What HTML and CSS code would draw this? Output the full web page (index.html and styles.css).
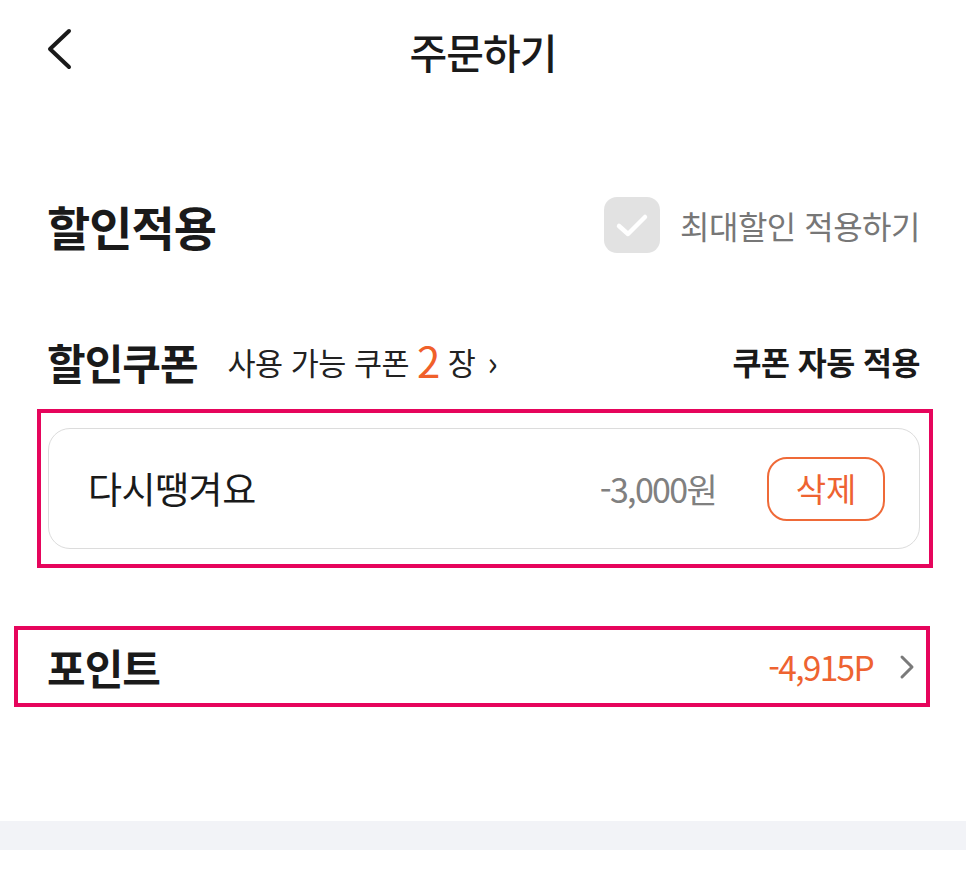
FILE: index.html
```html
<!DOCTYPE html>
<html lang="ko">
<head>
<meta charset="utf-8">
<title>주문하기</title>
<link rel="stylesheet" href="styles.css">
</head>
<body>
<div class="page">
  <header class="topbar">
    <svg class="back" width="28" height="42" viewBox="0 0 28 42"><path d="M24 3 L5 21 L24 39" fill="none" stroke="#1a1a1a" stroke-width="4" stroke-linecap="round" stroke-linejoin="round"/></svg>
    <h1 class="title">주문하기</h1>
  </header>

  <section class="discount-head">
    <h2 class="h-big">할인적용</h2>
    <label class="maxdc">
      <span class="chk"><svg width="56" height="56" viewBox="0 0 56 56"><path d="M15 29 L24 37 L41 20" fill="none" stroke="#fff" stroke-width="4.5" stroke-linecap="round" stroke-linejoin="round"/></svg></span>
      <span class="maxdc-text">최대할인 적용하기</span>
    </label>
  </section>

  <section class="coupon-head">
    <div class="coupon-left">
      <h3 class="h-mid">할인쿠폰</h3>
      <span class="avail">사용 가능 쿠폰 <b class="cnt">2</b> 장 <span class="gt">›</span></span>
    </div>
    <span class="auto">쿠폰 자동 적용</span>
  </section>

  <div class="mark mark-coupon">
    <div class="card">
      <span class="cname">다시땡겨요</span>
      <span class="camt">-3,000원</span>
      <button class="del">삭제</button>
    </div>
  </div>

  <div class="mark mark-point">
    <span class="h-mid">포인트</span>
    <span class="pright">
      <span class="pval">-4,915P</span>
      <svg width="16" height="26" viewBox="0 0 16 26"><path d="M3 3 L13 13 L3 23" fill="none" stroke="#7a7a7a" stroke-width="3" stroke-linecap="round" stroke-linejoin="round"/></svg>
    </span>
  </div>

  <div class="band"></div>
</div>
</body>
</html>
```

FILE: styles.css
```css
* { box-sizing: border-box; }
html, body { margin: 0; padding: 0; background: #fff; }
body {
  font-family: "Noto Sans CJK KR", "Noto Sans", sans-serif;
  color: #1a1a1a;
}
.page { width: 966px; }

.topbar {
  height: 100px;
  position: relative;
  display: flex;
  align-items: center;
  justify-content: center;
}
.back { position: absolute; left: 45px; top: 28px; }
.title {
  margin: 0;
  font-size: 41px;
  font-weight: 500;
  letter-spacing: -1px;
  line-height: 1;
  margin-top: 2px;
}

.discount-head {
  margin-top: 95px;
  height: 60px;
  padding: 0 46px 0 47px;
  display: flex;
  align-items: center;
  justify-content: space-between;
}
.h-big {
  margin: 0;
  font-size: 47px;
  font-weight: 700;
  letter-spacing: -1px;
  line-height: 1;
}
.maxdc { display: flex; align-items: center; gap: 20px; }
.chk {
  width: 56px; height: 56px;
  border-radius: 13px;
  background: #e2e2e2;
  display: block;
}
.chk svg { display: block; }
.maxdc-text {
  font-size: 32px;
  color: #777;
  letter-spacing: -0.5px;
  line-height: 1;
}

.coupon-head {
  margin-top: 82px;
  height: 50px;
  padding: 0 46px 0 47px;
  display: flex;
  align-items: center;
  justify-content: space-between;
}
.coupon-left { display: flex; align-items: center; gap: 30px; }
.h-mid {
  margin: 0;
  font-size: 42px;
  font-weight: 700;
  letter-spacing: -1px;
  line-height: 1;
}
.avail {
  font-size: 30.5px;
  color: #222;
  letter-spacing: -0.5px;
  line-height: 1;
  display: flex;
  align-items: center;
  gap: 8px;
}
.cnt {
  font-weight: 400;
  font-size: 42px;
  color: #f0602a;
  line-height: 1;
  margin-top: -4px;
}
.gt { font-size: 34px; margin-left: 4px; }
.auto {
  font-size: 31.5px;
  font-weight: 700;
  letter-spacing: -0.5px;
  line-height: 1;
}

.mark { border: 4px solid #e6055c; }
.mark-coupon {
  margin-top: 22px;
  margin-left: 37px;
  width: 896px;
  height: 159px;
  padding: 15px 9px 15px 7px;
}
.card {
  height: 121px;
  border: 1.5px solid #dcdcdc;
  border-radius: 22px;
  display: flex;
  align-items: center;
  padding: 0 34px 0 39px;
}
.cname {
  font-size: 37px;
  letter-spacing: -0.5px;
  line-height: 1;
  flex: 1;
}
.camt {
  font-size: 34px;
  color: #808080;
  letter-spacing: -1.7px;
  line-height: 1;
  margin-right: 51px;
}
.del {
  width: 118px; height: 64px;
  border: 2px solid #ef6a38;
  border-radius: 20px;
  background: #fff;
  color: #ee6331;
  font-family: inherit;
  font-size: 33px;
  line-height: 1;
  padding: 0;
}

.mark-point {
  margin-top: 58px;
  margin-left: 14px;
  width: 916px;
  height: 81px;
  padding: 0 11px 0 29px;
  display: flex;
  align-items: center;
  justify-content: space-between;
}
.pright { display: flex; align-items: center; gap: 26px; }
.pright svg { display: block; }
.pval {
  font-size: 33.5px;
  color: #ee6331;
  letter-spacing: -1.7px;
  line-height: 1;
}

.band {
  margin-top: 114px;
  height: 29px;
  background: #f2f3f7;
}
```
